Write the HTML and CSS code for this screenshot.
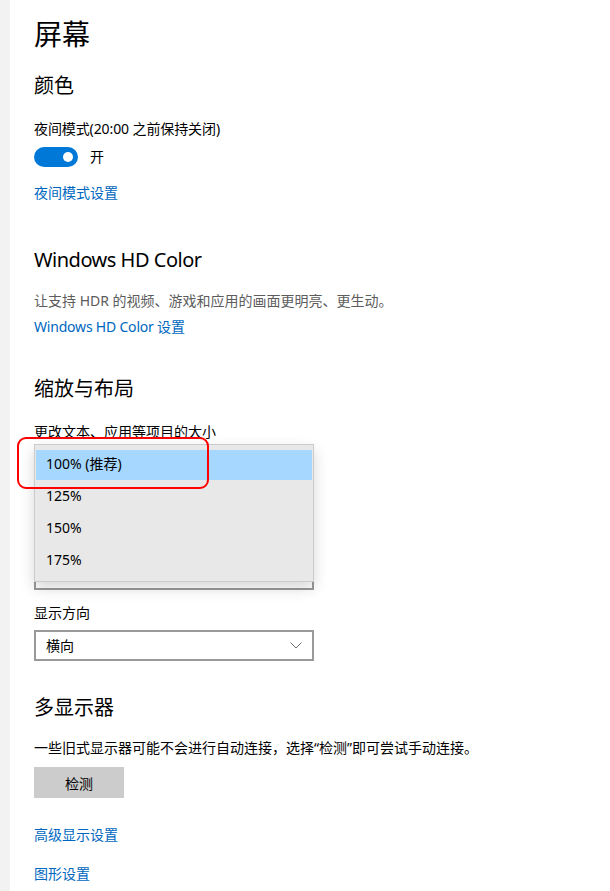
FILE: index.html
```html
<!DOCTYPE html>
<html lang="zh-CN">
<head>
<meta charset="utf-8">
<title>屏幕</title>
<link rel="stylesheet" href="styles.css">
</head>
<body>
<div class="page">
  <div class="rail"></div>
  <main class="main">
    <h1 class="title">屏幕</h1>

    <h2 class="sub sub-color">颜色</h2>
    <div class="label label-night">夜间模式(20:00 之前保持关闭)</div>
    <div class="toggle-row">
      <span class="toggle"><span class="knob"></span></span>
      <span class="toggle-text">开</span>
    </div>
    <a class="link link-night">夜间模式设置</a>

    <h2 class="sub sub-hd">Windows HD Color</h2>
    <div class="desc desc-hd">让支持 HDR 的视频、游戏和应用的画面更明亮、更生动。</div>
    <a class="link link-hd">Windows HD Color 设置</a>

    <h2 class="sub sub-scale">缩放与布局</h2>
    <div class="label label-scale">更改文本、应用等项目的大小</div>
    <div class="stack">
      <div class="combo combo-hidden"></div>
      <div class="combo combo-res"></div>
      <div class="popup">
        <div class="item selected">100% (推荐)</div>
        <div class="item">125%</div>
        <div class="item">150%</div>
        <div class="item">175%</div>
      </div>
      <div class="mark"></div>
    </div>

    <div class="label label-orient">显示方向</div>
    <div class="combo combo-orient">
      <span class="combo-text">横向</span>
      <svg class="chev" width="12" height="7" viewBox="0 0 12 7"><path d="M0.5 0.5 L6 6 L11.5 0.5" fill="none" stroke="#6e6e6e" stroke-width="1"/></svg>
    </div>

    <h2 class="sub sub-multi">多显示器</h2>
    <div class="label label-multi">一些旧式显示器可能不会进行自动连接，选择“检测”即可尝试手动连接。</div>
    <button class="btn">检测</button>
    <a class="link link-adv">高级显示设置</a>
    <a class="link link-gfx">图形设置</a>
  </main>
</div>
</body>
</html>
```
FILE: styles.css
```css
html, body {
  margin: 0;
  padding: 0;
  background: #ffffff;
}
body {
  font-family: "Noto Sans", "Noto Sans CJK SC", sans-serif;
  color: #000000;
}
.page {
  display: flex;
  min-height: 891px;
}
.rail {
  width: 10px;
  flex: 0 0 10px;
  background: #f2f2f2;
}
.main {
  flex: 1;
  padding: 14px 0 0 24px;
  display: flex;
  flex-direction: column;
  align-items: flex-start;
}
.title {
  margin: 0;
  font-size: 28px;
  line-height: 40px;
  font-weight: 400;
}
.sub {
  margin: 0;
  font-size: 20px;
  line-height: 28px;
  font-weight: 400;
}
.label, .desc, .link, .toggle-text {
  font-size: 14px;
  line-height: 20px;
}
.desc { color: #5c5c5c; }
.link {
  color: #0067c0;
  text-decoration: none;
  display: block;
}
.sub-color { margin-top: 18px; }
.label-night { margin-top: 19px; letter-spacing: -0.1px; }
.toggle-row {
  margin-top: 8px;
  display: flex;
  align-items: center;
  height: 20px;
}
.toggle {
  width: 44px;
  height: 20px;
  border-radius: 10px;
  background: #0078d7;
  position: relative;
  display: block;
}
.knob {
  position: absolute;
  width: 10px;
  height: 10px;
  border-radius: 50%;
  background: #ffffff;
  right: 5px;
  top: 5px;
}
.toggle-text { margin-left: 12px; }
.link-night { margin-top: 16px; }
.sub-hd { margin-top: 43px; letter-spacing: -0.5px; }
.desc-hd { margin-top: 17px; }
.link-hd { margin-top: 6px; letter-spacing: -0.2px; }
.sub-scale { margin-top: 38px; }
.label-scale { margin-top: 19px; }

.stack {
  position: relative;
  margin-top: 8px;
  width: 280px;
}
.combo {
  box-sizing: border-box;
  width: 280px;
  height: 31px;
  border: 2px solid #999999;
  background: #ffffff;
}
.combo-res { margin-top: 78px; }
.popup {
  position: absolute;
  left: 0;
  top: -6px;
  box-sizing: border-box;
  width: 280px;
  height: 138px;
  border: 1px solid #cbcbcb;
  background: #e8e8e8;
  padding: 5px 1px 0 1px;
  display: flex;
  flex-direction: column;
  gap: 2px;
  box-shadow: 0 6px 14px rgba(0, 0, 0, 0.16);
}
.item {
  height: 30px;
  line-height: 28px;
  padding-left: 10px;
  font-size: 14px;
}
.item.selected { background: #a6d7fe; }
.mark {
  position: absolute;
  left: -17px;
  top: -13px;
  width: 192px;
  height: 52px;
  box-sizing: border-box;
  border: 2px solid #ff0000;
  border-radius: 9px;
}
.label-orient { margin-top: 13px; }
.combo-orient {
  margin-top: 7px;
  display: flex;
  align-items: center;
  justify-content: space-between;
  padding: 0 10px 0 10px;
}
.combo-text {
  font-size: 14px;
  line-height: 20px;
}
.chev { display: block; }
.sub-multi { margin-top: 33px; }
.label-multi { margin-top: 16px; }
.btn {
  margin-top: 9px;
  width: 90px;
  height: 31px;
  border: none;
  background: #cccccc;
  font-family: "Noto Sans", "Noto Sans CJK SC", sans-serif;
  font-size: 14px;
  color: #000000;
  padding: 0;
}
.link-adv { margin-top: 27px; }
.link-gfx { margin-top: 19px; }
```
